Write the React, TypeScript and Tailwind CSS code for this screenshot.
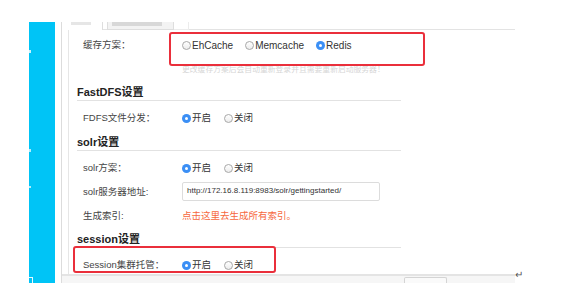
const font = "font-['Liberation_Sans','Noto_Sans_CJK_SC',sans-serif]";

type RadioProps = { label: string; checked?: boolean };

const Radio = ({ label, checked }: RadioProps) => (
    <label className="flex items-center">
        {checked ? (
            <span className="w-[9px] h-[9px] rounded-full bg-[#3b8ff5] flex items-center justify-center">
                <span className="w-[3px] h-[3px] rounded-full bg-white" />
            </span>
        ) : (
            <span className="w-[9px] h-[9px] rounded-full border border-[#a8a8a8] bg-gradient-to-b from-white to-[#ececec]" />
        )}
        <span className="ml-[1px] text-[#333]">{label}</span>
    </label>
);

const Row = ({ label, children }: { label: string; children: React.ReactNode }) => (
    <div className="h-[24px] flex items-center pl-[14px]">
        <div className="w-[99px] shrink-0 text-[#444]">{label}</div>
        <div className="flex items-center">{children}</div>
    </div>
);

const Heading = ({ title, className }: { title: string; className: string }) => (
    <div className={`ml-[8px] w-[324px] h-[17px] border-b border-[#e2e2e2] flex items-center font-bold text-[11px] text-[#222] ${className}`}>
        {title}
    </div>
);

function App() {
    return (
        <div className={`w-[578px] h-[283px] bg-white flex overflow-hidden text-[9.5px] ${font}`}>
            <div className="w-[29px] shrink-0" />

            {/* side bar, only its right part shows */}
            <div className="w-[26px] shrink-0 mt-[22px] bg-[#00c4f6] flex flex-col">
                <div className="mt-[28px] w-[2px] h-[3px] bg-white/80" />
                <div className="mt-[96px] w-[2px] h-[3px] bg-white/70" />
                <div className="mt-[34px] w-[2px] h-[3px] bg-white/70" />
                <div className="mt-[89px] w-[4px] h-[6px] border-t border-r border-white/90" />
            </div>
            <div className="w-[6px] shrink-0" />

            <div className="w-[454px] shrink-0 mt-[22px] flex flex-col border-l border-[#dcdcdc]">
                {/* tabs, cut off at the top */}
                <div className="h-[8px] flex">
                    <div className="w-[41px] border-r border-[#dedede] flex">
                        <div className="ml-[9px] w-[20px] h-[3px] bg-[#e6e6e6]" />
                    </div>
                    <div className="w-[4px] border-b border-[#e3e3e3]" />
                    <div className="w-[67px] bg-[#f3f3f3] border-x border-b border-[#dedede] flex">
                        <div className="ml-[4px] w-[50px] h-[4px] bg-[#d8d8d8]" />
                    </div>
                    <div className="w-[15px] border-b border-r border-[#ececec]" />
                    <div className="flex-1 border-b border-[#e3e3e3]" />
                </div>

                <div className="flex-1 min-h-0 flex">
                    <div className="w-[6px] shrink-0" />
                    <div className="flex-1 border-l border-[#e6e6e6] relative overflow-hidden">
                        <div className="h-[30px] flex items-center pl-[14px]">
                            <div className="w-[99px] shrink-0 text-[#444]">缓存方案：</div>
                            <div className="flex items-center gap-[12px] text-[10px]">
                                <Radio label="EhCache" />
                                <Radio label="Memcache" />
                                <Radio label="Redis" checked />
                            </div>
                        </div>
                        <div className="mt-[2px] h-[16px] flex items-center pl-[113px] text-[7.8px] text-[#d6d6d6]">
                            更改缓存方案后会自动重新登录并且需要重新启动服务器！
                        </div>

                        <Heading title="FastDFS设置" className="mt-[6px]" />
                        <div className="mt-[5px]">
                            <Row label="FDFS文件分发：">
                                <div className="flex gap-[13px]">
                                    <Radio label="开启" checked />
                                    <Radio label="关闭" />
                                </div>
                            </Row>
                        </div>

                        <Heading title="solr设置" className="mt-[4px]" />
                        <div className="mt-[5px]">
                            <Row label="solr方案：">
                                <div className="flex gap-[13px]">
                                    <Radio label="开启" checked />
                                    <Radio label="关闭" />
                                </div>
                            </Row>
                            <Row label="solr服务器地址:">
                                <div className="w-[198px] h-[19px] border border-[#dcdcdc] rounded-[2px] flex items-center px-[4px] text-[8px] text-[#333] -mt-[2px]">
                                    http://172.16.8.119:8983/solr/gettingstarted/
                                </div>
                            </Row>
                            <Row label="生成索引:">
                                <a className="text-[#f6683d] cursor-pointer">点击这里去生成所有索引。</a>
                            </Row>
                        </div>

                        <Heading title="session设置" className="mt-[3px]" />
                        <div className="mt-[5px]">
                            <Row label="Session集群托管：">
                                <div className="flex gap-[13px]">
                                    <Radio label="开启" checked />
                                    <Radio label="关闭" />
                                </div>
                            </Row>
                        </div>

                        {/* red annotation boxes */}
                        <div className="absolute left-[100px] top-[2px] w-[256px] h-[34px] border-2 border-[#ea2f3b] rounded-[3px]" />
                        <div className="absolute left-[4px] top-[216px] w-[203px] h-[27px] border-2 border-[#ea2f3b] rounded-[3px]" />
                    </div>
                </div>

                {/* bottom bar */}
                <div className="h-[9px] shrink-0 border-t-2 border-[#e4e4e4] bg-[#f6f6f6] flex">
                    <div className="ml-[342px] mt-[1px] w-[43px] border-x border-t border-[#d4d4d4] rounded-t-[2px] bg-[#fafafa]" />
                </div>
            </div>

            <div className="flex flex-col justify-end pb-[1px]">
                <span className="text-[#555] text-[10px] leading-none mb-[2px]">↵</span>
            </div>
        </div>
    );
}

export default App;
